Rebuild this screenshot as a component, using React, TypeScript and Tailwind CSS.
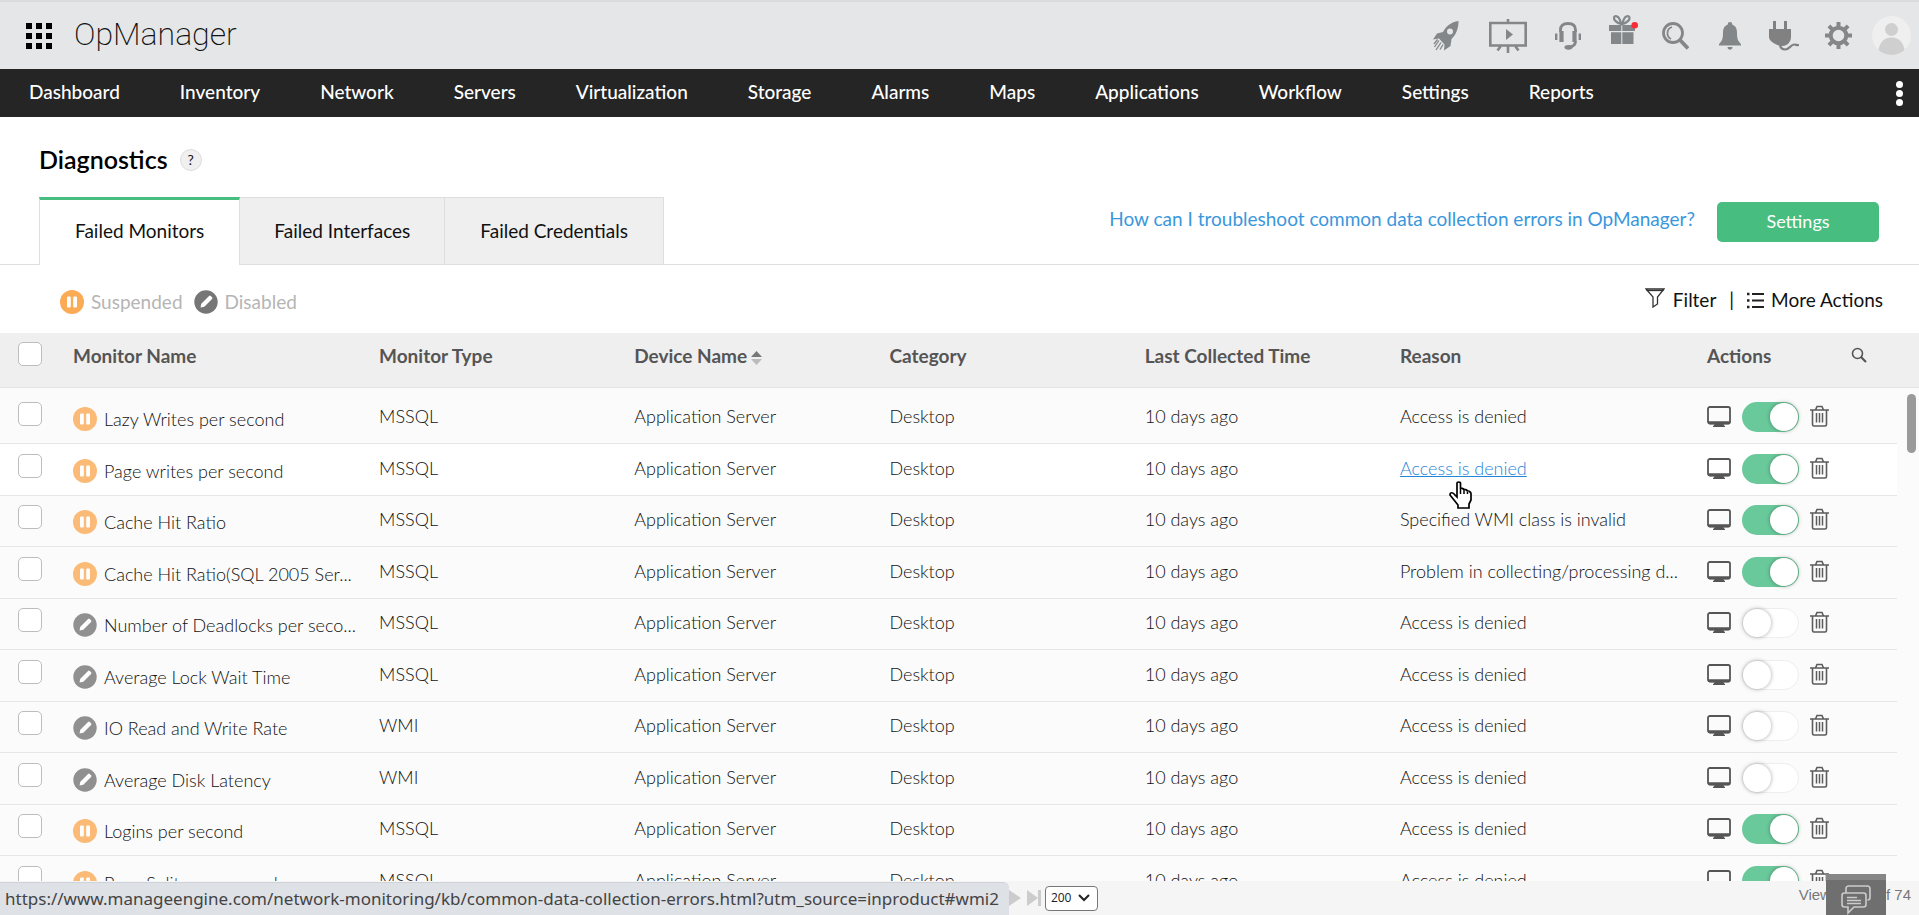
import React from "react";

const C = "flex items-center";

function Pause({ faded }: { faded?: boolean }) {
  return (
    <svg width="24" height="24" viewBox="0 0 24 24" className={faded ? "shrink-0 opacity-80" : "shrink-0"} aria-hidden="true">
      <circle cx="12" cy="12" r="12" fill="#fbab56" />
      <rect x="7" y="6.500" width="3.800" height="11" rx="1" fill="#fff" />
      <rect x="13.200" y="6.500" width="3.800" height="11" rx="1" fill="#fff" />
    </svg>
  );
}

function Disabled({ faded }: { faded?: boolean }) {
  return (
    <svg width="24" height="24" viewBox="0 0 24 24" className={faded ? "shrink-0 opacity-80" : "shrink-0"} aria-hidden="true">
      <circle cx="12" cy="12" r="11.700" fill="#767676" />
      <path d="M6.500 17.500l.8-3.800 7.800-7.800q.8-.6 1.600 0l1.400 1.400q.6.800 0 1.600l-7.800 7.800z" fill="#fff" />
    </svg>
  );
}

function MonitorIcon() {
  return (
    <svg width="24" height="21" viewBox="0 0 24 21" aria-hidden="true">
      <rect x="1" y="1" width="22" height="16.500" rx="1.800" fill="none" stroke="#555" strokeWidth="1.800" />
      <path d="M1 15.200h22v1.500a1.500 1.500 0 0 1-1.500 1.500h-19A1.500 1.500 0 0 1 1 16.700zM8 18h8l2 2.200v.8H6v-.8z" fill="#555" />
    </svg>
  );
}

function Trash() {
  return (
    <svg width="19" height="22" viewBox="0 0 19 22" fill="none" stroke="#5c5c5c" strokeWidth="1.600" aria-hidden="true">
      <path d="M0 5h19M2.500 5v14.500a1.500 1.500 0 0 0 1.500 1.500h11a1.500 1.500 0 0 0 1.500-1.500V5M5.500 5l1.500-3.500h5L13.500 5" />
      <path d="M6.500 8v9.500M9.500 8v9.500M12.500 8v9.500" strokeWidth="1.500" />
    </svg>
  );
}

const nav = ["Dashboard", "Inventory", "Network", "Servers", "Virtualization", "Storage", "Alarms", "Maps", "Applications", "Workflow", "Settings", "Reports"];

type Row = { name: string; type: string; reason: string; on: boolean };
const rows: Row[] = [
  { name: "Lazy Writes per second", type: "MSSQL", reason: "Access is denied", on: true },
  { name: "Page writes per second", type: "MSSQL", reason: "Access is denied", on: true },
  { name: "Cache Hit Ratio", type: "MSSQL", reason: "Specified WMI class is invalid", on: true },
  { name: "Cache Hit Ratio(SQL 2005 Ser...", type: "MSSQL", reason: "Problem in collecting/processing d...", on: true },
  { name: "Number of Deadlocks per seco...", type: "MSSQL", reason: "Access is denied", on: false },
  { name: "Average Lock Wait Time", type: "MSSQL", reason: "Access is denied", on: false },
  { name: "IO Read and Write Rate", type: "WMI", reason: "Access is denied", on: false },
  { name: "Average Disk Latency", type: "WMI", reason: "Access is denied", on: false },
  { name: "Logins per second", type: "MSSQL", reason: "Access is denied", on: true },
  { name: "Page Splits per second", type: "MSSQL", reason: "Access is denied", on: true },
];

function Check({ label }: { label: string }) {
  return <input type="checkbox" aria-label={label} className="block h-6 w-6 appearance-none rounded-[5px] border border-[#bdbdbd] bg-white" />;
}

function HeaderIcons() {
  const g = "#83878a";
  return (
    <div className={C + " pr-2"}>
      <button aria-label="Quick start" className="mr-[30px]">
        <svg width="26" height="30" viewBox="0 0 26 30" fill={g}>
          <path fillRule="evenodd" d="M25.500 0C18 1 13 5.500 10 11L4 12.500 0 18.500l6-1 5.500 6-.5 6 6.500-4.500 1-7C23 13.500 25.500 8 25.500 0zM17 7.500a3 3 0 1 1 0 6 3 3 0 0 1 0-6z" />
          <path d="M6 19.500L1.500 26M8 21.500L3 29M10 23.500L7 28.500M4.500 18.500L1 23" stroke={g} strokeWidth="1.300" />
        </svg>
      </button>
      <button aria-label="Presentation" className="mr-7">
        <svg width="38" height="34" viewBox="0 0 38 34" fill="none" stroke={g} strokeWidth="2.600">
          <path d="M1.300 4h35.400v22.500H1.300zM19 0v4M19 27v7M11.500 27.500l-3 4M26.500 27.500l3 4" />
          <path d="M17 10l7 5.500-7 5.500z" fill={g} stroke="none" />
        </svg>
      </button>
      <button aria-label="Support" className="mr-7">
        <svg width="26" height="28" viewBox="0 0 26 28" fill="none" stroke={g}>
          <path d="M5.500 10V8q0-6.500 7.500-6.500T20.500 8v2M20.500 19c0 4-2 5.500-6 6" strokeWidth="2.800" />
          <path d="M6.500 9v11M19.500 9v11" strokeWidth="4.200" />
          <path d="M1.200 11.500v6.500M24.800 11.500v6.500" strokeWidth="2.400" />
          <ellipse cx="13.500" cy="25.300" rx="4" ry="2.400" fill={g} stroke="none" />
        </svg>
      </button>
      <button aria-label="What's new" className="mr-6 pb-[14px]">
        <svg width="29" height="30" viewBox="0 0 29 30" fill={g}>
          <path d="M0 11h12.300v6H0zM13.300 11H26v6H13.300zM2 18.200h10.300V30H2zM13.300 18.200H24.500V30H13.300z" />
          <path d="M12 10C7.500 9 4.500 5.500 5 3.500S10.500.5 12 10zM13.500 10C18 9 21 5.500 20.500 3.500S15 .5 13.500 10z" fill="none" stroke={g} strokeWidth="2.200" />
          <circle cx="25.700" cy="11.300" r="3.300" fill="#fb2b38" />
        </svg>
      </button>
      <button aria-label="Search" className="mr-[30px]">
        <svg width="27" height="28" viewBox="0 0 27 28" fill="none" stroke={g}>
          <circle cx="11" cy="11" r="9.500" strokeWidth="2.800" />
          <path d="M10 5a6.500 6.500 0 0 0-1 12" strokeWidth="1.800" />
          <path d="M18 18l8 8.500" strokeWidth="3.800" />
        </svg>
      </button>
      <button aria-label="Alerts" className="mr-7">
        <svg width="22" height="28" viewBox="0 0 22 28" fill={g}>
          <path d="M11 0a2.200 2.200 0 0 1 2.200 2.500C17 4 18 7 18 11c0 6 1 8 4 11v1.500H0V22c3-3 4-5 4-11 0-4 1-7 4.800-8.500A2.200 2.200 0 0 1 11 0zM8.500 25h5c0 3.500-5 3.500-5 0z" />
        </svg>
      </button>
      <button aria-label="Integrations" className="mr-[26px]">
        <svg width="30" height="30" viewBox="0 0 30 30" fill="#818181">
          <path d="M4 0h3v8h8V0h3v8h4v8c0 5-4 9-8.500 9S0 21 0 16V8h4z" />
          <path d="M11 23c0 4 2 5.500 5.500 5.500S22 23.500 25 23.500s2 1 5 .5" fill="none" stroke="#818181" strokeWidth="2.200" />
        </svg>
      </button>
      <button aria-label="Settings" className="mr-5">
        <svg width="27" height="27" viewBox="-13.500 -13.500 27 27" fill="none" stroke={g}>
          <circle r="7.800" strokeWidth="4" />
          <path d="M0-9v-4.500M0 9v4.500M-9 0h-4.500M9 0h4.500M6.400-6.400l3.200-3.200M-6.400-6.400l-3.200-3.200M6.400 6.400l3.200 3.200M-6.400 6.400l-3.200 3.200" strokeWidth="4" />
        </svg>
      </button>
      <button aria-label="Account">
        <svg width="39" height="39" viewBox="0 0 39 39">
          <clipPath id="av"><circle cx="19.500" cy="19.500" r="19.500" /></clipPath>
          <circle cx="19.500" cy="19.500" r="19.500" fill="#efefef" />
          <circle cx="19.500" cy="13.500" r="6.500" fill="#cfcfcf" />
          <path d="M6 39c0-12 6-17.500 13.500-17.500S33 27 33 39z" fill="#cfcfcf" clipPath="url(#av)" />
        </svg>
      </button>
    </div>
  );
}

const th = "text-left align-top pt-[11px] font-bold text-[19px] leading-6 text-[#555]";

export default function App() {
  return (
    <div className="relative flex h-screen flex-col overflow-hidden bg-white font-['Lato',sans-serif] text-[#111]">
      <header className="flex h-[69px] shrink-0 items-center justify-between border-t-2 border-[#d9dbdc] bg-[#e4e6e7]">
        <div className={C + " gap-[22px] pl-[26px]"}>
          <button aria-label="Apps">
            <svg width="26" height="26" viewBox="0 0 26 26">
              {[0, 10, 20].map((y) => [0, 10, 20].map((x) => <rect key={x + "-" + y} x={x} y={y} width="6" height="6" />))}
            </svg>
          </button>
          <span className="pb-1 font-['Roboto_Slab','Roboto',serif] text-[32px] leading-10 font-extralight text-[#111]">OpManager</span>
        </div>
        <HeaderIcons />
      </header>
      <nav className="flex h-12 shrink-0 items-center justify-between bg-[#252525] pr-4 pl-[29px] text-[19px] font-medium text-white">
        <div className="flex gap-[60px] pb-[2px]">
          {nav.map((n) => <a key={n} href="#">{n}</a>)}
        </div>
        <button aria-label="More" className="flex flex-col gap-[2px]">
          <i className="size-[7px] rounded-full bg-white" /><i className="size-[7px] rounded-full bg-white" /><i className="size-[7px] rounded-full bg-white" />
        </button>
      </nav>

      <div className="flex h-20 shrink-0 items-center gap-3 pl-[39px] pt-1">
        <h1 className="text-[25px] leading-8 font-semibold text-black">Diagnostics</h1>
        <button className="mt-[2px] size-[22px] rounded-full border border-[#ddd] bg-[#f0f0f0] text-sm leading-5">?</button>
      </div>

      <div className="flex h-[68px] shrink-0 items-stretch">
        <div className="w-[39px] border-b border-[#dedede]" />
        <div className="flex text-[19px]">
          <button className="border-x border-t-3 border-x-[#dedede] border-t-[#47bd80] px-[35px] pb-[2px]">Failed Monitors</button>
          <button className="border-y border-r border-[#dedede] bg-[#efefef] px-[34px]">Failed Interfaces</button>
          <button className="border-y border-r border-[#dedede] bg-[#efefef] px-[35px]">Failed Credentials</button>
        </div>
        <div className="flex flex-1 items-start justify-end gap-[22px] border-b border-[#dedede] pt-[5px] pr-10">
          <a href="#" className="pt-[3px] text-[19px] leading-7 text-[#3a97dc]">How can I troubleshoot common data collection errors in OpManager?</a>
          <button className="h-10 w-[162px] rounded-[5px] bg-[#47bd80] pb-[2px] text-lg leading-6 text-white">Settings</button>
        </div>
      </div>

      <div className="flex h-[68px] shrink-0 items-center justify-between pr-9 pl-[60px] text-[19px]">
        <div className={C + " gap-[7px] pt-[6px] text-[#b5b5b5]"}>
          <Pause /><span className="mr-1">Suspended</span>
          <Disabled /><span>Disabled</span>
        </div>
        <div className={C + " gap-[13px] pt-[2px]"}>
          <button className={C + " gap-2"}>
            <svg width="20" height="20" viewBox="0 0 20 20" className="mb-1" fill="none" stroke="#333" strokeWidth="1.300"><path d="M1 1h18l-6.500 8v7L8 19V9z" /><path d="M1.500 2.500h17" /></svg>
            Filter
          </button>
          <span>|</span>
          <button className={C + " gap-[7px]"}>
            <svg width="17" height="17" viewBox="0 0 17 17" stroke="#222" strokeWidth="1.800"><path d="M5 2h12M5 8.500h12M5 15h12" /><path d="M0 2h2.500M0 8.500h2.500M0 15h2.500" strokeWidth="2.600" /></svg>
            More Actions
          </button>
        </div>
      </div>

      <div className="relative min-h-0 flex-1 overflow-hidden bg-[#fbfbfb]">
        <table className="w-full table-fixed border-separate border-spacing-0 text-lg text-[#111]">
          <colgroup>
            <col className="w-[72px]" /><col className="w-[16%]" /><col className="w-[13.300%]" /><col className="w-[13.300%]" /><col className="w-[13.300%]" /><col className="w-[13.300%]" /><col className="w-[16%]" /><col className="w-[144px]" /><col /><col className="w-[22px]" />
          </colgroup>
          <thead>
            <tr className="h-[55px] bg-[#efefef] [&>th]:border-b [&>th]:border-[#e3e3e3]">
              <th className="pt-[9px] pl-[18px] align-top"><Check label="Select all" /></th>
              <th className={th + " pl-px"}>Monitor Name</th>
              <th className={th}>Monitor Type</th>
              <th className={th}>
                <span className={C + " gap-1"}>Device Name
                  <svg width="11" height="14" viewBox="0 0 11 14" className="mt-1"><path d="M0 6l5.500-6L11 6z" fill="#777" /><path d="M0 8l5.500 6L11 8z" fill="#bbb" /></svg>
                </span>
              </th>
              <th className={th}>Category</th>
              <th className={th}>Last Collected Time</th>
              <th className={th}>Reason</th>
              <th className={th}>Actions</th>
              <th className={th}>
                <button aria-label="Search rows"><svg width="16" height="16" viewBox="0 0 16 16" fill="none" stroke="#555"><circle cx="6.500" cy="6.500" r="5" strokeWidth="1.600" /><path d="M10 10l5 5" strokeWidth="2.200" /></svg></button>
              </th>
              <th />
            </tr>
          </thead>
          <tbody>
            {rows.map((r, i) => (
              <tr key={r.name} className={(i === 0 ? "h-14" : i % 2 ? "h-[52px]" : "h-[51px]") + " align-bottom [&>td:not(:last-child)]:border-b [&>td]:border-[#e6e6e6]" + (i === 1 ? " [&>td:not(:last-child)]:bg-white" : "")}>
                <td className="pb-[17px] pl-[18px]"><Check label={"Select " + r.name} /></td>
                <td className="pb-[10px] pl-px"><div className="flex items-center gap-[7px] whitespace-nowrap">{r.on ? <Pause faded /> : <Disabled faded />}<span className="font-light">{r.name}</span></div></td>
                <td className="pb-[13px] font-light">{r.type}</td>
                <td className="pb-[13px] font-light">Application Server</td>
                <td className="pb-[13px] font-light">Desktop</td>
                <td className="pb-[13px] font-light">10 days ago</td>
                <td className="pb-[13px] font-light whitespace-nowrap">{i === 1 ? <a href="#" className="text-[#1f86d8] underline">{r.reason}</a> : r.reason}</td>
                <td className="pb-[11px]">
                  <div className="flex items-center gap-[11px]">
                    <button aria-label="Device" className="pb-[2px]"><MonitorIcon /></button>
                    <button role="switch" aria-checked={r.on} aria-label="Monitoring" className={r.on ? "flex h-[30px] w-[57px] items-center justify-end rounded-full bg-[#6ac99a] pr-px" : "flex h-[30px] w-[57px] items-center rounded-full border border-[#eee] bg-white"}>
                      <i className="size-7 rounded-full bg-white shadow-[0_0_4px_rgba(0,0,0,0.35)]" />
                    </button>
                    <button aria-label="Delete" className="pb-[2px]"><Trash /></button>
                  </div>
                </td>
                <td />
                <td />
              </tr>
            ))}
          </tbody>
        </table>
        <div className="absolute top-[61px] right-[3px] h-[59px] w-[9px] rounded-full bg-[#9a9a9a]" />
      </div>

      <footer className="flex h-[34px] shrink-0 items-center bg-[#f5f5f5]">
        <div className="h-[33px] self-end rounded-tr-md border-t border-[#cfd2d6] bg-[#dee1e6] pr-[10px] pl-[5px] font-['Noto_Sans',sans-serif] text-[17px] leading-8 whitespace-nowrap text-[#444]">
          https://www.manageengine.com/network-monitoring/kb/common-data-collection-errors.html?utm_source=inproduct#wmi2
        </div>
        <button aria-label="Next page"><svg width="12" height="16" viewBox="0 0 12 16"><path d="M0 0l12 8-12 8z" fill="#ccc" /></svg></button>
        <button aria-label="Last page" className="ml-[6px]"><svg width="14" height="16" viewBox="0 0 14 16" fill="#ccc"><path d="M0 0l11 8-11 8zM11 0h3v16h-3z" /></svg></button>
        <span className="relative ml-1 flex items-center">
          <select aria-label="Rows per page" className="h-[25px] w-[53px] appearance-none rounded-sm border border-[#777] bg-white pl-[5px] font-['Open_Sans',sans-serif] text-xs text-[#222]"><option>200</option></select>
          <svg width="12" height="8" viewBox="0 0 12 8" className="pointer-events-none absolute right-2" fill="none" stroke="#222" strokeWidth="2"><path d="M1 1l5 5 5-5" /></svg>
        </span>
        <span className="ml-auto pr-2 pb-[6px] font-['Liberation_Sans',sans-serif] text-[15px] leading-5 whitespace-nowrap text-[#777]">View 1 - 74 of 74</span>
      </footer>

      <button aria-label="Chat" className="absolute right-[33px] bottom-0 flex h-[41px] w-[60px] items-start justify-center border-t-6 border-[#868686] bg-[#6f6f6f] pt-[5px]">
        <svg width="30" height="30" viewBox="0 0 30 30" fill="none" stroke="#ccc" strokeWidth="1.600">
          <path d="M5 8V3.500A2.500 2.500 0 0 1 7.500 1h19A2.500 2.500 0 0 1 29 3.500v9a2.500 2.500 0 0 1-2.500 2.500" />
          <path d="M3.500 8h19A2.500 2.500 0 0 1 25 10.500v9a2.500 2.500 0 0 1-2.500 2.500H13l-6 6v-6H3.500A2.500 2.500 0 0 1 1 19.500v-9A2.500 2.500 0 0 1 3.500 8zM6 12.500h10M6 15.500h14M6 18.500h14" />
        </svg>
      </button>

      <svg width="24" height="28" viewBox="0 0 24 28" className="pointer-events-none absolute top-[481px] left-[1449px]" aria-hidden="true">
        <path d="M8 14V2.500C8 .5 11.500.5 11.500 2.500V8c0-1 3.500-1 3.500 1 0-1 3.500-.5 3.500 1.500 0-1 3.500-.5 3.500 2V19l-2 4v4H9v-3l-4-5-4-5c0-3 3-3 5 0l2 2z" fill="#fff" stroke="#000" strokeWidth="1.700" />
        <path d="M11.500 8v5M15 9v4M18.500 10.500V13" stroke="#000" strokeWidth="1.500" />
      </svg>
    </div>
  );
}
